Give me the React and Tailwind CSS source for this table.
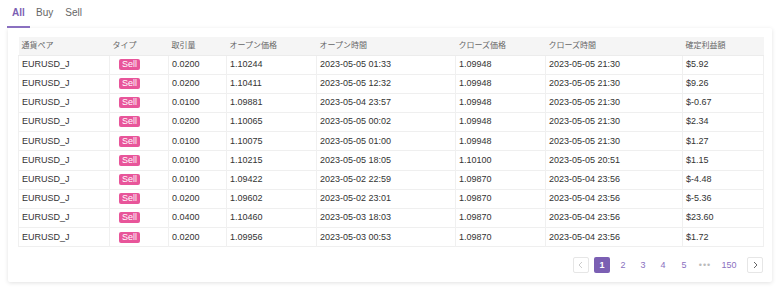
const rows = [
  ["0.0200", "1.10244", "2023-05-05 01:33", "1.09948", "2023-05-05 21:30", "$5.92"],
  ["0.0200", "1.10411", "2023-05-05 12:32", "1.09948", "2023-05-05 21:30", "$9.26"],
  ["0.0100", "1.09881", "2023-05-04 23:57", "1.09948", "2023-05-05 21:30", "$-0.67"],
  ["0.0200", "1.10065", "2023-05-05 00:02", "1.09948", "2023-05-05 21:30", "$2.34"],
  ["0.0100", "1.10075", "2023-05-05 01:00", "1.09948", "2023-05-05 21:30", "$1.27"],
  ["0.0100", "1.10215", "2023-05-05 18:05", "1.10100", "2023-05-05 20:51", "$1.15"],
  ["0.0100", "1.09422", "2023-05-02 22:59", "1.09870", "2023-05-04 23:56", "$-4.48"],
  ["0.0200", "1.09602", "2023-05-02 23:01", "1.09870", "2023-05-04 23:56", "$-5.36"],
  ["0.0400", "1.10460", "2023-05-03 18:03", "1.09870", "2023-05-04 23:56", "$23.60"],
  ["0.0200", "1.09956", "2023-05-03 00:53", "1.09870", "2023-05-04 23:56", "$1.72"],
];

const headers = [
  "通貨ペア",
  "タイプ",
  "取引量",
  "オープン価格",
  "オープン時間",
  "クローズ価格",
  "クローズ時間",
  "確定利益額",
];

const widths = ["w-[91px]", "w-[59px]", "w-[58px]", "w-[90px]", "w-[139px]", "w-[90px]", "w-[137px]", "w-[81px]"];

function Chevron({ dir }) {
  return (
    <svg width="8" height="8" viewBox="0 0 8 8" fill="none" stroke="currentColor" strokeWidth="1">
      {dir === "left" ? <path d="M5 1 L2 4 L5 7" /> : <path d="M3 1 L6 4 L3 7" />}
    </svg>
  );
}

export default function App() {
  return (
    <div
      className="w-[780px] h-[290px] bg-white text-[#333] overflow-hidden"
      style={{ fontFamily: '"Liberation Sans", "Noto Sans CJK JP", sans-serif' }}
    >
      {/* tabs */}
      <div className="flex items-end h-[28px] pl-[7px] text-[10px]">
        <div className="flex flex-col items-center w-[23px]">
          <span className="text-[#7b5fb3] font-bold">All</span>
          <div className="mt-[6px] h-[2px] w-full bg-[#8a70c0]" />
        </div>
        <div className="flex gap-[12px] ml-[6px] text-[#666] pb-[8px]">
          <span>Buy</span>
          <span>Sell</span>
        </div>
      </div>

      {/* card */}
      <div className="mx-[8px] h-[254px] bg-white shadow-[0_1px_4px_rgba(0,0,0,0.12)] rounded-[2px] pt-[9px] px-[10px]">
        <table className="table-fixed border-collapse w-[745px] text-[9px]">
          <thead>
            <tr className="bg-[#f5f5f5] h-[18px]">
              {headers.map((h, i) => (
                <th
                  key={h}
                  className={`${widths[i]} text-left font-normal text-[8px] text-[#666] px-[3px] border-b border-[#ececec]`}
                >
                  {h}
                </th>
              ))}
            </tr>
          </thead>
          <tbody>
            {rows.map((r, idx) => (
              <tr key={idx} className="h-[19.2px] border-b border-[#efefef]">
                <td className="px-[3px] border-l border-[#f0f0f0]">EURUSD_J</td>
                <td className="px-[3px] border-l border-[#f0f0f0]">
                  <span className="ml-[6px] inline-block bg-[#e8559a] text-white text-[9px] leading-[11px] px-[3px] rounded-[2px]">
                    Sell
                  </span>
                </td>
                {r.map((c, j) => (
                  <td
                    key={j}
                    className={`px-[3px] border-l border-[#f0f0f0] ${j === r.length - 1 ? "border-r" : ""}`}
                  >
                    {c}
                  </td>
                ))}
              </tr>
            ))}
          </tbody>
        </table>

        {/* pagination */}
        <div className="flex items-center justify-end mt-[10px] w-[745px] text-[9px] text-[#8a70c0]">
          <div className="w-[16px] h-[16px] border border-[#e6e6e6] rounded-[2px] flex items-center justify-center text-[#ccc]">
            <Chevron dir="left" />
          </div>
          <div className="ml-[5px] w-[16px] h-[16px] rounded-[2px] bg-[#7b5fb3] text-white font-bold flex items-center justify-center">
            1
          </div>
          <div className="w-[20px] text-center ml-[3px]">2</div>
          <div className="w-[20px] text-center">3</div>
          <div className="w-[20px] text-center">4</div>
          <div className="w-[22px] text-center">5</div>
          <div className="w-[20px] text-center text-[#bbb] tracking-[1px]">•••</div>
          <div className="w-[28px] text-center">150</div>
          <div className="ml-[4px] w-[16px] h-[16px] border border-[#e6e6e6] rounded-[2px] flex items-center justify-center text-[#666]">
            <Chevron dir="right" />
          </div>
        </div>
      </div>
    </div>
  );
}
